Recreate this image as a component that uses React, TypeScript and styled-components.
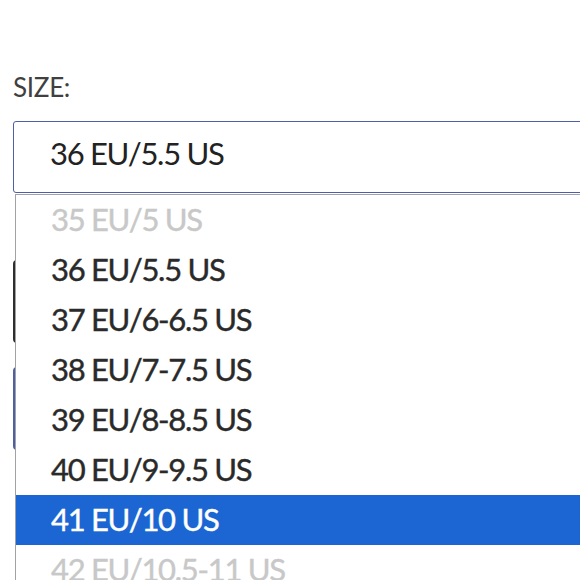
import styled, { createGlobalStyle } from "styled-components";

const colors = {
  text: "#222222",
  label: "#404040",
  muted: "#c8c8c8",
  accent: "#4d5fa6",
  selected: "#1b66d2",
  border: "#a2a2a2",
};

const GlobalStyle = createGlobalStyle`
  html, body {
    margin: 0;
    padding: 0;
    background: #fff;
    overflow: hidden;
  }
  body {
    font-family: Lato, "Open Sans", sans-serif;
  }
`;

const Page = styled.div`
  position: relative;
  width: 580px;
  height: 580px;
  overflow: hidden;
  padding-left: 13px;
  box-sizing: border-box;
`;

const Label = styled.div`
  margin-top: 72px;
  font-size: 26px;
  line-height: 30px;
  letter-spacing: -0.3px;
  color: ${colors.label};
`;

const SelectBox = styled.div`
  margin-top: 19px;
  width: 700px;
  height: 72px;
  box-sizing: border-box;
  border: 1.5px solid ${colors.accent};
  border-radius: 3px;
  padding: 13px 0 0 36px;
  font-size: 31px;
  line-height: 37px;
  letter-spacing: -1.3px;
  color: ${colors.text};
`;

const Actions = styled.div`
  margin-top: 67px;
  display: flex;
  flex-direction: column;
  gap: 24px;
`;

const GhostButton = styled.div<{ $variant: "dark" | "blue" }>`
  width: 500px;
  height: 83px;
  box-sizing: border-box;
  border-radius: 4px;
  border: 2px solid ${(p) => (p.$variant === "dark" ? "#2e2e2e" : colors.accent)};
  background: ${(p) => (p.$variant === "dark" ? "#fff" : colors.accent)};
`;

const Menu = styled.ul`
  position: absolute;
  top: 194px;
  left: 15px;
  width: 700px;
  margin: 0;
  padding: 0;
  list-style: none;
  background: #fff;
  border: 1px solid ${colors.border};
`;

const Option = styled.li<{ $disabled?: boolean; $active?: boolean }>`
  height: 50px;
  display: flex;
  align-items: center;
  padding: 0 0 2px 35px;
  box-sizing: border-box;
  font-size: 31px;
  line-height: 37px;
  letter-spacing: -1.3px;
  -webkit-text-stroke: 0.4px currentColor;
  background: ${(p) => (p.$active ? colors.selected : "transparent")};
  color: ${(p) => (p.$active ? "#fff" : p.$disabled ? colors.muted : "#2a2a2a")};
`;

const sizes = [
  { label: "35 EU/5 US", disabled: true },
  { label: "36 EU/5.5 US" },
  { label: "37 EU/6-6.5 US" },
  { label: "38 EU/7-7.5 US" },
  { label: "39 EU/8-8.5 US" },
  { label: "40 EU/9-9.5 US" },
  { label: "41 EU/10 US", active: true },
  { label: "42 EU/10.5-11 US", disabled: true },
];

export default function App() {
  return (
    <>
      <GlobalStyle />
      <Page>
        <Label>SIZE:</Label>
        <SelectBox>36 EU/5.5 US</SelectBox>
        <Actions>
          <GhostButton $variant="dark" />
          <GhostButton $variant="blue" />
        </Actions>
        <Menu>
          {sizes.map((s) => (
            <Option key={s.label} $disabled={s.disabled} $active={s.active}>
              {s.label}
            </Option>
          ))}
        </Menu>
      </Page>
    </>
  );
}
